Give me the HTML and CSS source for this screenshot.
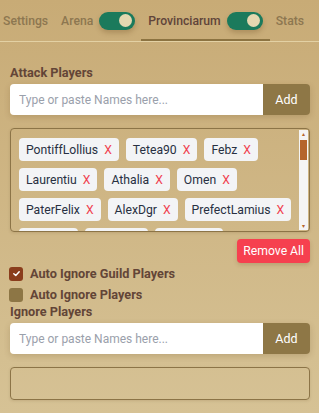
FILE: index.html
```html
<!DOCTYPE html>
<html lang="en">
<head>
    <meta charset="UTF-8">
    <title>Provinciarum</title>
    <link rel="stylesheet" href="styles.css">
</head>
<body>
    <div class="tabs">
        <span class="tab">Settings</span>
        <span class="tab">Arena <span class="toggle"><span class="knob"></span></span></span>
        <span class="tab active">Provinciarum <span class="toggle"><span class="knob"></span></span></span>
        <span class="tab">Stats</span>
    </div>

    <div class="panel">
        <label class="section-label">Attack Players</label>
        <div class="input-group">
            <input type="text" placeholder="Type or paste Names here...">
            <button class="add-button">Add</button>
        </div>

        <div class="tag-box">
            <div class="tag-list">
                <span class="tag">PontiffLollius <span class="remove">X</span></span>
                <span class="tag">Tetea90 <span class="remove">X</span></span>
                <span class="tag">Febz <span class="remove">X</span></span>
                <span class="tag">Laurentiu <span class="remove">X</span></span>
                <span class="tag">Athalia <span class="remove">X</span></span>
                <span class="tag">Omen <span class="remove">X</span></span>
                <span class="tag">PaterFelix <span class="remove">X</span></span>
                <span class="tag">AlexDgr <span class="remove">X</span></span>
                <span class="tag">PrefectLamius <span class="remove">X</span></span>
                <span class="tag">Gaius <span class="remove">X</span></span>
                <span class="tag">Brutus <span class="remove">X</span></span>
                <span class="tag">Claudia <span class="remove">X</span></span>
            </div>
            <div class="scrollbar">
                <span class="arrow">&#9652;</span>
                <span class="thumb"></span>
                <span class="arrow bottom">&#9662;</span>
            </div>
        </div>

        <div class="actions">
            <button class="remove-all">Remove All</button>
        </div>

        <div class="check-row">
            <span class="checkbox checked">
                <svg width="9" height="9" viewBox="0 0 10 10"><path d="M2 5.2 L4.2 7.2 L8 3" fill="none" stroke="#fff" stroke-width="1.6" stroke-linecap="round" stroke-linejoin="round"/></svg>
            </span>
            <span class="check-label">Auto Ignore Guild Players</span>
        </div>
        <div class="check-row">
            <span class="checkbox"></span>
            <span class="check-label">Auto Ignore Players</span>
        </div>

        <label class="section-label">Ignore Players</label>
        <div class="input-group">
            <input type="text" placeholder="Type or paste Names here...">
            <button class="add-button">Add</button>
        </div>

        <div class="tag-box empty"></div>
    </div>
</body>
</html>
```

FILE: styles.css
```css
body {
    margin: 0;
    font-family: Roboto, "Noto Sans", sans-serif;
    background: linear-gradient(#c8ab76, #d6c295);
    height: 413px;
    overflow: hidden;
}

.tabs {
    display: flex;
    align-items: center;
    height: 41px;
    border-bottom: 1px solid #e3d1a4;
    padding-left: 3px;
}

.tab {
    display: flex;
    align-items: center;
    height: 100%;
    box-sizing: border-box;
    margin-right: 13px;
    font-size: 12.2px;
    font-weight: 500;
    color: #8d7750;
}

.tab.active {
    color: #60443a;
    border-bottom: 2px solid #8c7341;
    padding: 2px 7px 0 7px;
    margin-left: -7px;
    margin-right: 6px;
}

.toggle {
    display: inline-flex;
    align-items: center;
    justify-content: flex-end;
    width: 36px;
    height: 18px;
    margin-left: 6px;
    border-radius: 9px;
    background: #1b7a5c;
    box-shadow: 0 3px 5px rgba(90, 60, 20, 0.25);
    box-sizing: border-box;
    padding: 0 3px;
}

.knob {
    width: 13px;
    height: 13px;
    border-radius: 50%;
    background: #e5d7b0;
}

.panel {
    padding: 24px 9px 0 10px;
}

.section-label {
    display: block;
    font-size: 12.7px;
    line-height: 14px;
    font-weight: bold;
    color: #634537;
    margin-bottom: 4px;
}

.input-group {
    display: flex;
    height: 31px;
    border-radius: 4px;
    overflow: hidden;
    box-shadow: 0 2px 6px rgba(90, 60, 20, 0.2);
}

.input-group input {
    flex: 1;
    min-width: 0;
    border: none;
    padding: 0 9px;
    font-family: inherit;
    font-size: 12px;
    outline: none;
    background: #ffffff;
}

.input-group input::placeholder {
    color: #9aa0ab;
}

.add-button {
    width: 47px;
    border: none;
    background: #8e7746;
    color: #ffffff;
    font-family: inherit;
    font-size: 12.5px;
}

.tag-box {
    display: flex;
    margin-top: 13px;
    height: 104px;
    border: 1px solid #8c7447;
    border-radius: 4px;
    box-sizing: border-box;
    overflow: hidden;
    box-shadow: 0 1px 3px rgba(90, 60, 20, 0.15);
}

.tag-list {
    flex: 1;
    display: flex;
    flex-wrap: wrap;
    align-content: flex-start;
    gap: 7px;
    padding: 9px 0 0 8px;
}

.tag {
    display: inline-flex;
    align-items: center;
    height: 23px;
    padding: 0 7px;
    border-radius: 4px;
    background: #f3f4f6;
    font-size: 12.2px;
    color: #283042;
}

.remove {
    color: #f0404e;
    margin-left: 6px;
}

.scrollbar {
    position: relative;
    width: 9px;
    margin: 1px 1px 1px 0;
    background: #f5f5f5;
}

.arrow {
    position: absolute;
    left: 0;
    top: 0;
    width: 9px;
    text-align: center;
    font-size: 6px;
    line-height: 8px;
    color: #b5652c;
}

.arrow.bottom {
    top: auto;
    bottom: 0;
}

.thumb {
    position: absolute;
    top: 10px;
    left: 1px;
    width: 7px;
    height: 20px;
    background: #b5652c;
}

.tag-box.empty {
    height: 33px;
}

.actions {
    display: flex;
    justify-content: flex-end;
    margin-top: 7px;
}

.remove-all {
    border: none;
    border-radius: 4px;
    background: #f6404f;
    color: #ffffff;
    font-family: inherit;
    font-size: 12.2px;
    height: 24px;
    padding: 0 6px;
    box-shadow: 0 2px 4px rgba(90, 60, 20, 0.2);
}

.check-row {
    display: flex;
    align-items: center;
    gap: 7px;
    height: 21px;
    margin-left: -1px;
}

.check-label {
    font-size: 12.7px;
    line-height: 14px;
    font-weight: bold;
    color: #634537;
}

.checkbox {
    display: inline-flex;
    align-items: center;
    justify-content: center;
    width: 14px;
    height: 14px;
    border-radius: 3px;
    background: #8d7645;
}

.checkbox.checked {
    background: #8a3d1c;
}
```
